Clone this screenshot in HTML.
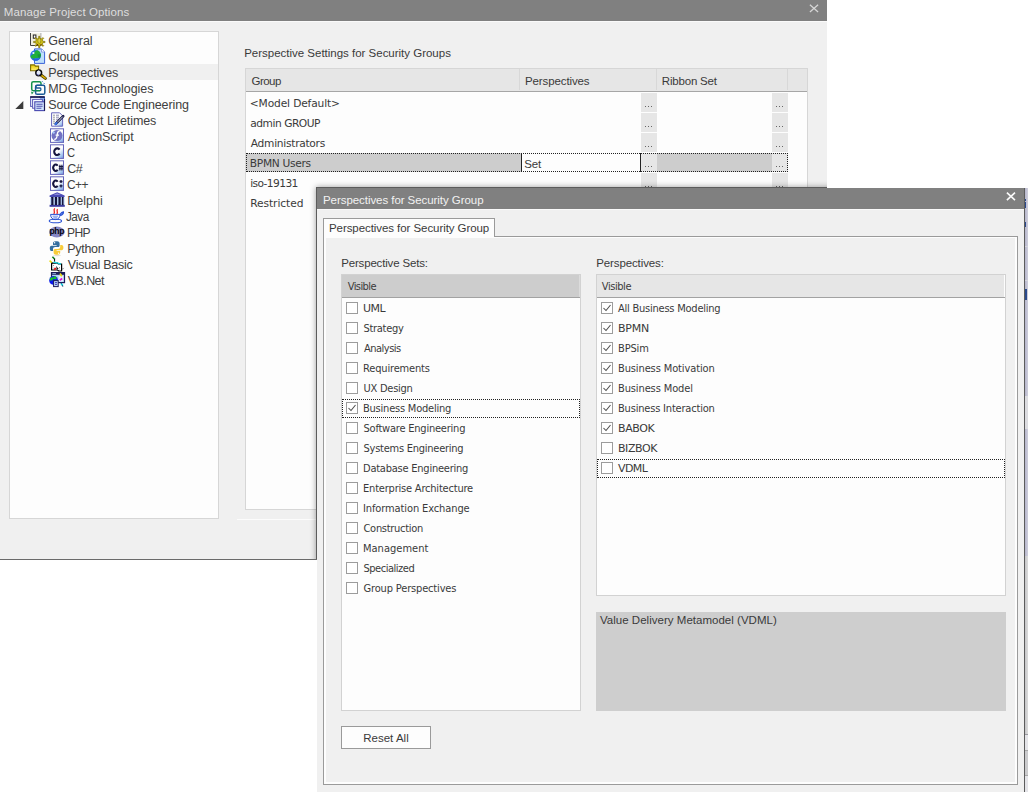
<!DOCTYPE html>
<html><head><meta charset="utf-8"><title>Manage Project Options</title>
<style>
*{box-sizing:border-box;margin:0;padding:0}
html,body{width:1028px;height:792px;overflow:hidden;background:#fff}
body{position:relative;font-family:"Liberation Sans",sans-serif;font-size:12px;color:#3a3a3a}
.a{position:absolute}
.t{position:absolute;white-space:nowrap;line-height:16px;height:16px}
.seg{font-family:"Liberation Sans",sans-serif;font-size:11.5px}
.tah{font-family:"DejaVu Sans Condensed","DejaVu Sans",sans-serif;font-stretch:condensed;font-size:11px}

.tahw{font-family:"DejaVu Sans",sans-serif;font-size:11px}
.dv{font-family:"DejaVu Sans",sans-serif;font-size:10.67px}
.lb{font-family:"Liberation Sans",sans-serif;font-size:12.5px;color:#404040}
#d1{position:absolute;left:0;top:0;width:827px;height:560px;background:#f0f0f0;border-bottom:1px solid #6a6a6a;overflow:hidden}
#cut{position:absolute;left:316px;top:187px;width:600px;height:500px;border-left:1px solid #5c5c5c;border-top:1px solid #5c5c5c;box-shadow:0 0 6px rgba(0,0,0,.38);background:#f0f0f0}
.tb{position:absolute;left:0;top:0;right:0;height:21px;background:#808080;color:#dedede}
#tree{position:absolute;left:9px;top:31px;width:210px;height:488px;background:#fdfdfd;border:1px solid #d6d6d6}
.tr{position:absolute;left:0;width:208px;height:16px}
.tr svg{position:absolute;top:0}
#tbl{position:absolute;left:245px;top:68px;width:563px;height:442px;background:#fdfdfd;border:1px solid #d6d6d6}
#d2{position:absolute;left:317px;top:188px;width:708px;height:620px;background:#f0f0f0;border-right:1px solid #5c5c5c}
.cb{position:absolute;width:12px;height:12px;border:1px solid #9c9c9c;background:#fff}
.cb svg{position:absolute;left:0;top:0}
.eb{position:absolute;width:16px;height:19px;background:#e6e6e6}
.eb i{position:absolute;top:13px;width:1px;height:1px;background:#666}
</style></head><body>

<div id="d1">
<div class="tb">
<span class="t seg" style="left:3.8px;top:4px;letter-spacing:0.10px;">Manage Project Options</span>
<svg class="a" style="left:809px;top:4px" width="10" height="10" viewBox="0 0 10 10"><path d="M.9 .7L9.1 8M9.1 .7L.9 8" stroke="#d6d6d6" stroke-width="1.25" fill="none"/></svg></div>
<div class="a" style="left:0;top:21px;width:827px;height:1px;background:#fafafa"></div>
<div id="tree">
<div class="tr" style="top:0px">
<svg style="left:20px;overflow:visible" width="17" height="16" viewBox="0 0 17 16"><path d="M0.5 1V13.5H11" fill="none" stroke="#444" stroke-width="1"/><path d="M1 1.2H10.8V13H1Z" fill="#f1efe0"/><path d="M10.9 1V8" stroke="#aaa" stroke-width="1"/><rect x="3.3" y="3" width="2.6" height="3.2" fill="#fff" stroke="#222" stroke-width="1"/><g transform="translate(9.3,10)"><path d="M-0.6 -3.7L-0.6 -5.7L0.6 -5.7L0.6 -3.7L2.2 -3.0L3.6 -4.4L4.4 -3.6L3.0 -2.2L3.7 -0.6L5.7 -0.6L5.7 0.6L3.7 0.6L3.0 2.2L4.4 3.6L3.6 4.4L2.2 3.0L0.6 3.7L0.6 5.7L-0.6 5.7L-0.6 3.7L-2.2 3.0L-3.6 4.4L-4.4 3.6L-3.0 2.2L-3.7 0.6L-5.7 0.6L-5.7 -0.6L-3.7 -0.6L-3.0 -2.2L-4.4 -3.6L-3.6 -4.4L-2.2 -3.0Z" fill="#cbbd16" stroke="#7a6c00" stroke-width=".7"/><ellipse cx="0" cy="-1.2" rx="1.5" ry="2.6" fill="#ddd24a" stroke="#8a7c00" stroke-width=".6"/><path d="M-2.6 3.4L-1.4 2.2M2.6 3.4L1.4 2.2" stroke="#501000" stroke-width="1"/></g></svg>
<span class="t lb" style="left:38.2px;top:1px;letter-spacing:-0.01px;">General</span>
</div>
<div class="tr" style="top:16px">
<svg style="left:20px;overflow:visible" width="17" height="16" viewBox="0 0 17 16"><path d="M4.5 0.9H11.5L14.6 4V15.4H4.5Z" fill="#bfe0fb" stroke="#3a62d8" stroke-width="1"/><path d="M11.5 0.9V4H14.6" fill="#fff" stroke="#7a8ee0" stroke-width=".8"/><circle cx="5.6" cy="7.4" r="5.4" fill="#2a74e6"/><path d="M0.4 8.5C1 6.5 3 6.8 4 5.2C4.5 3.5 5.5 2.4 7.5 2.3C9.6 3 10.8 5 10.9 7.5C10 9 9 9 8 10C6.5 10.6 5.5 9.6 4.5 10.5C3 11 1.2 10.4 0.4 8.5Z" fill="#1fb03a"/><path d="M7.5 6.5C8.5 6 9.5 6.5 10.8 6.2C11 8 10.5 9.5 9.6 10.8C8.5 10 7.5 8.5 7.5 6.5Z" fill="#14903a" opacity=".8"/><path d="M2 10.2C4 11.6 7 11.4 9.8 10.4C8.8 12 7.2 12.8 5.6 12.8C4.2 12.8 2.8 12 2 10.2Z" fill="#2a62dc"/><circle cx="3.4" cy="5" r="1.1" fill="#f0f8ff"/></svg>
<span class="t lb" style="left:38.2px;top:1px;letter-spacing:-0.23px;">Cloud</span>
</div>
<div class="tr" style="top:32px;background:#f0f0f0">
<svg style="left:20px;overflow:visible" width="17" height="16" viewBox="0 0 17 16"><defs><linearGradient id="gf" x1="0" y1="0" x2="0" y2="1"><stop offset="0" stop-color="#e6c800"/><stop offset="1" stop-color="#fff27a"/></linearGradient></defs><path d="M0.6 0.9H4.4L5.4 2.1H8.6V6.8H0.6Z" fill="url(#gf)" stroke="#7d6e00" stroke-width="1.1"/><path d="M11 11L15.4 14.4" stroke="#4a3c00" stroke-width="3" stroke-linecap="round"/><path d="M11.4 11.3L15.2 14.2" stroke="#d8ac00" stroke-width="1.5" stroke-linecap="round"/><circle cx="8.7" cy="8.8" r="2.9" fill="#dfe6fb" stroke="#0c0c0c" stroke-width="1.5"/><path d="M6.6 9.6A2.4 2.4 0 0 0 8.8 11.2" stroke="#7070d0" stroke-width="1" fill="none"/><path d="M7.6 7.4A1.8 1.8 0 0 1 9.4 7" stroke="#fff" stroke-width="1" fill="none"/></svg>
<span class="t lb" style="left:38.2px;top:1px;letter-spacing:-0.13px;">Perspectives</span>
</div>
<div class="tr" style="top:48px">
<svg style="left:20px;overflow:visible" width="17" height="16" viewBox="0 0 17 16"><rect x="1.7" y="1.7" width="9.3" height="9" rx="1.6" fill="none" stroke="#13924a" stroke-width="1.5"/><rect x="5.6" y="5.3" width="9.2" height="9" rx="1.6" fill="#fdfdfd" stroke="#1a5a96" stroke-width="1.5"/><path d="M10.2 5.4H6.8C5.6 5.4 5.6 8 6.8 8H10C11.2 8 11.2 10.7 10 10.7H5.4" fill="none" stroke="#1a5a96" stroke-width="1.3"/><path d="M5.6 10.7H10.2" stroke="#13924a" stroke-width="1.4"/><path d="M1 11.6L3.6 12.4L1.8 14.4Z" fill="#13924a"/><path d="M12 1.2L13 2.2M13.8 3L14.6 4" stroke="#3a7ac8" stroke-width="1"/></svg>
<span class="t lb" style="left:38.2px;top:1px;letter-spacing:-0.00px;">MDG Technologies</span>
</div>
<div class="tr" style="top:64px">
<svg style="left:5px;top:4px" width="10" height="10" viewBox="0 0 10 10"><path d="M8.3 1V9H0.3Z" fill="#3c3c3c"/></svg>
<svg style="left:20px;overflow:visible" width="17" height="16" viewBox="0 0 17 16"><rect x="0.6" y="1" width="10.4" height="9.4" fill="#eaf2fe" stroke="#5c5cb8" stroke-width="1"/><path d="M9 1H14.4V9.4" fill="#8fb4ee" stroke="#2a4ec0" stroke-width="1"/><rect x="0.2" y="0.2" width="14.6" height="1.6" fill="#16164a"/><rect x="2.6" y="3.4" width="9.8" height="8.8" fill="#f4f8ff" stroke="#5c5cb8" stroke-width="1"/><rect x="4.8" y="5.8" width="9.6" height="8.8" fill="#d2e4fb" stroke="#4848b0" stroke-width="1.1"/><path d="M6.4 8.2H12.6M6.4 10.2H12.6M6.4 12.2H11.4" stroke="#5050b4" stroke-width="1.1"/><path d="M14.6 3V14.8" stroke="#16164a" stroke-width="1"/></svg>
<span class="t lb" style="left:38.2px;top:1px;letter-spacing:-0.11px;">Source Code Engineering</span>
</div>
<div class="tr" style="top:80px">
<svg style="left:39px;overflow:visible" width="17" height="16" viewBox="0 0 17 16"><defs><linearGradient id="go" x1="0" y1="0" x2="1" y2="1"><stop offset=".6" stop-color="#fefefe"/><stop offset=".85" stop-color="#a8c8f0"/><stop offset="1" stop-color="#6f8fdc"/></linearGradient></defs><path d="M2.6 0.8H10.6L13.6 3.8V14.2H2.6Z" fill="url(#go)" stroke="#6666bb" stroke-width="1"/><path d="M4.5 3.2H5.5M4.5 5.2H5.5M4.5 7.2H5.5M4.5 9.2H5.5M4.5 11.2H5.5" stroke="#333" stroke-width="1"/><path d="M7 3.2H10M7 5.2H10M7 7.2H10.5M7 9.2H9" stroke="#8a8ab0" stroke-width="1"/><path d="M14.2 4.2L7 11.6" stroke="#141440" stroke-width="2.6" stroke-linecap="round"/><path d="M13.8 4.6L8.2 10.4" stroke="#e8eefc" stroke-width=".9"/><path d="M6.4 12.3L7.6 11" stroke="#3a70e0" stroke-width="2.2" stroke-linecap="round"/></svg>
<span class="t lb" style="left:57.8px;top:1px;letter-spacing:-0.07px;">Object Lifetimes</span>
</div>
<div class="tr" style="top:96px">
<svg style="left:39px;overflow:visible" width="17" height="16" viewBox="0 0 17 16"><defs><linearGradient id="gq" x1="0" y1="0" x2="1" y2="1"><stop offset=".55" stop-color="#fefefe"/><stop offset=".8" stop-color="#a8c8f0"/><stop offset="1" stop-color="#6f8fdc"/></linearGradient></defs><rect x="1.5" y="0.8" width="13" height="13.6" fill="url(#gq)" stroke="#6666bb" stroke-width="1"/><circle cx="8" cy="7.6" r="5.5" fill="#7272c2"/><circle cx="4.6" cy="4.6" r="1.2" fill="#a8c8f8"/><path d="M10.6 3.4C8.6 3.2 8.4 5 8.2 7C8 9.6 7.4 11.4 5.2 11.4M6.6 7.2H10" stroke="#fff" stroke-width="1.3" fill="none"/></svg>
<span class="t lb" style="left:57.8px;top:1px;letter-spacing:-0.08px;">ActionScript</span>
</div>
<div class="tr" style="top:112px">
<svg style="left:39px;overflow:visible" width="17" height="16" viewBox="0 0 17 16"><rect x="1.5" y="0.8" width="13" height="13.6" fill="url(#gq)" stroke="#6666bb" stroke-width="1"/><path d="M10.6 5.7A3 3.3 0 1 0 10.6 9.7" fill="none" stroke="#15153f" stroke-width="2.1"/></svg>
<span class="t lb" style="left:57.2px;top:1px;letter-spacing:-0.60px;transform:scaleX(0.894);transform-origin:0 0;">C</span>
</div>
<div class="tr" style="top:128px">
<svg style="left:39px;overflow:visible" width="17" height="16" viewBox="0 0 17 16"><rect x="1.5" y="0.8" width="13" height="13.6" fill="url(#gq)" stroke="#6666bb" stroke-width="1"/><path d="M8.6 5.7A2.4 3.3 0 1 0 8.6 9.7" fill="none" stroke="#15153f" stroke-width="2"/><path d="M10.9 4.8V10.6M12.9 4.8V10.6M9.8 6.6H14M9.8 8.8H14" stroke="#15153f" stroke-width="1.1"/></svg>
<span class="t lb" style="left:57.2px;top:1px;letter-spacing:-0.45px;">C#</span>
</div>
<div class="tr" style="top:144px">
<svg style="left:39px;overflow:visible" width="17" height="16" viewBox="0 0 17 16"><rect x="1.5" y="0.8" width="13" height="13.6" fill="url(#gq)" stroke="#6666bb" stroke-width="1"/><path d="M8.6 5.7A2.4 3.3 0 1 0 8.6 9.7" fill="none" stroke="#15153f" stroke-width="2"/><path d="M12 4V7M10.5 5.5H13.5M12 8.4V11.4M10.5 9.9H13.5" stroke="#15153f" stroke-width="1.3"/></svg>
<span class="t lb" style="left:57.2px;top:1px;letter-spacing:-0.60px;transform:scaleX(0.959);transform-origin:0 0;">C++</span>
</div>
<div class="tr" style="top:160px">
<svg style="left:39px;overflow:visible" width="17" height="16" viewBox="0 0 17 16"><path d="M8.2 0.2L15.6 3.6V5H0.6V3.6Z" fill="#4a4ab4"/><path d="M8.2 1.2L12 3H4.4Z" fill="#8a8ad8"/><rect x="0.6" y="12.8" width="15.2" height="2" fill="#3a3aa0"/><g fill="#15153f"><rect x="2" y="5" width="2.6" height="8"/><rect x="5.6" y="5" width="2.6" height="8"/><rect x="9.2" y="5" width="2.6" height="8"/><rect x="12.6" y="5" width="2.2" height="8"/></g><g fill="#9ec4f4"><rect x="1.4" y="5.4" width=".9" height="7.2"/><rect x="4.8" y="5.4" width=".9" height="7.2"/><rect x="8.4" y="5.4" width=".9" height="7.2"/><rect x="11.9" y="5.4" width=".8" height="7.2"/><rect x="14.6" y="5.4" width=".8" height="7.2"/></g></svg>
<span class="t lb" style="left:57.2px;top:1px;letter-spacing:0.03px;">Delphi</span>
</div>
<div class="tr" style="top:176px">
<svg style="left:39px;overflow:visible" width="17" height="16" viewBox="0 0 17 16"><path d="M5.8 0.4C3.6 2.2 6.8 3.6 4.8 6M8.6 1.2C6.8 2.8 9.6 3.8 7.8 6" stroke="#ee1111" stroke-width="1.2" fill="none"/><path d="M1.6 6.4H11C11 9.4 9.4 11.6 6.3 11.6C3.2 11.6 1.6 9.4 1.6 6.4Z" fill="#f4f6ff" stroke="#2a52d4" stroke-width="1"/><path d="M3.6 8.2H9M4.4 9.8H8.2" stroke="#6a8aec" stroke-width=".9"/><path d="M11 7.4C13 7.2 14.6 5.6 14.4 4C13.4 4 12 5 11.2 6.4" stroke="#2a52d4" stroke-width="1.3" fill="none"/><ellipse cx="6.4" cy="13" rx="6.2" ry="1.8" fill="none" stroke="#2a52d4" stroke-width="1.1"/></svg>
<span class="t lb" style="left:56.2px;top:1px;letter-spacing:-0.60px;transform:scaleX(0.942);transform-origin:0 0;">Java</span>
</div>
<div class="tr" style="top:192px">
<svg style="left:39px;overflow:visible" width="17" height="16" viewBox="0 0 17 16"><ellipse cx="7.8" cy="8" rx="7.8" ry="5.4" fill="#8686c4"/><ellipse cx="6" cy="6.5" rx="5" ry="3" fill="#a0a0d4" opacity=".6"/><text x="7.8" y="10.2" text-anchor="middle" font-family="'Liberation Sans',sans-serif" font-weight="700" font-size="8.6" letter-spacing="-.4" fill="#050510">php</text></svg>
<span class="t lb" style="left:57.2px;top:1px;letter-spacing:-0.60px;transform:scaleX(0.965);transform-origin:0 0;">PHP</span>
</div>
<div class="tr" style="top:208px">
<svg style="left:39px;overflow:visible" width="17" height="16" viewBox="0 0 17 16"><path d="M6.6 1.2C4.4 1.2 4 2.2 4 3.4V5H7.6V5.8H2.6C1.2 5.8 .8 7 .8 8.4C.8 9.8 1.4 11 2.6 11H4V9C4 7.8 5 7 6.2 7H9.2C10.2 7 10.6 6.2 10.6 5.4V3.2C10.6 2 9.4 1.2 8.4 1.2Z" fill="#356f9f"/><circle cx="5.6" cy="2.8" r=".7" fill="#fff"/><path d="M8.6 14.8C10.8 14.8 11.2 13.8 11.2 12.6V11H7.6V10.2H12.6C14 10.2 14.4 9 14.4 7.6C14.4 6.2 13.8 5 12.6 5H11.2V7C11.2 8.2 10.2 9 9 9H6C5 9 4.6 9.8 4.6 10.6V12.8C4.6 14 5.8 14.8 6.8 14.8Z" fill="#f8cc3a"/><circle cx="9.6" cy="13.2" r=".7" fill="#fff"/><ellipse cx="8" cy="15.6" rx="4" ry=".6" fill="#bbb" opacity=".5"/></svg>
<span class="t lb" style="left:57.2px;top:1px;letter-spacing:-0.27px;">Python</span>
</div>
<div class="tr" style="top:224px">
<svg style="left:39px;overflow:visible" width="17" height="16" viewBox="0 0 17 16"><path d="M2.6 7.2H8.4L9.4 8H12.6V15H9.6L8.6 14H2.6Z" fill="#fff" stroke="#000" stroke-width="1.2"/><path d="M4.4 6.4H6.4L7.2 7H9.2L10 7.8H12" stroke="#10e0e8" stroke-width="1.2" fill="none"/><path d="M4 9.5H5M7 10.5H8M10 11.5H11M4.5 12H5.5M10.5 13H11" stroke="#999" stroke-width="1"/><path d="M7.6 11.2L9 12.6L7.6 13" stroke="#000" stroke-width="1" fill="#000"/><path d="M3.4 0.8L5.8 3.2" stroke="#0a7a1a" stroke-width="1.6"/><path d="M5.6 3L5.6 5.6" stroke="#000" stroke-width="1"/><path d="M.6 4.6L2.8 6.6" stroke="#eadc10" stroke-width="1.6"/><path d="M2.8 6.6L3.6 7.2" stroke="#000" stroke-width="1"/><path d="M5.2 13.6L6.8 12" stroke="#e81010" stroke-width="1.7"/><path d="M13 12.6L15.4 11.8L13.4 14Z" fill="#888"/></svg>
<span class="t lb" style="left:57.8px;top:1px;letter-spacing:-0.27px;">Visual Basic</span>
</div>
<div class="tr" style="top:240px">
<svg style="left:39px;overflow:visible" width="17" height="16" viewBox="0 0 17 16"><rect x="2.5" y="0.6" width="13" height="10" fill="#b4d2f6" stroke="#1c1c58" stroke-width="1.2"/><rect x="2.5" y="0.6" width="13" height="2.2" fill="#1c1c58"/><path d="M3.4 1.6H7" stroke="#9ab4e8" stroke-width=".9"/><rect x="9.6" y="4" width="4.6" height="5.4" fill="#eaf2fe"/><circle cx="4.6" cy="8.4" r="4.4" fill="#0a18f0"/><path d="M.6 7L2.6 5.2L4.4 5.6L5 4.2L7 4.6L7.8 6.4L6 7.4L4.6 6.8L3 8.4L1 8.6Z" fill="#18c02a"/><rect x="4.6" y="8.6" width="4.6" height="6" fill="#bcd6f8" stroke="#1c1c58" stroke-width="1"/><path d="M6 10.6H8M6 12.4H8" stroke="#3a3ac0" stroke-width="1"/><path d="M11 1.6L12.8 4.2" stroke="#eadc10" stroke-width="1.7"/><path d="M10.8 8.2L13.2 6.6" stroke="#e414d8" stroke-width="1.8"/><path d="M12 11.2L13.8 13.8" stroke="#10d0e0" stroke-width="1.7"/><path d="M11.6 10.4L12.4 11.6M13.4 13.4L13.8 14.6" stroke="#1c1c58" stroke-width="1"/></svg>
<span class="t lb" style="left:57.8px;top:1px;letter-spacing:-0.59px;">VB.Net</span>
</div>
</div>
<span class="t seg" style="left:244.2px;top:45px;letter-spacing:-0.01px;">Perspective Settings for Security Groups</span>
<div id="tbl">
<div class="a" style="left:0;top:0;width:561px;height:22px;background:#e6e6e6"></div>
<div class="a" style="left:0;top:22px;width:561px;height:1px;background:#a6a6a6"></div>
<div class="a" style="left:273px;top:0;width:1px;height:21px;background:#d8d8d8"></div>
<div class="a" style="left:410px;top:0;width:1px;height:21px;background:#d8d8d8"></div>
<div class="a" style="left:541px;top:0;width:1px;height:21px;background:#d8d8d8"></div>
<span class="t seg" style="left:5.5px;top:4px;letter-spacing:-0.53px;">Group</span>
<span class="t seg" style="left:279.0px;top:4px;letter-spacing:-0.11px;">Perspectives</span>
<span class="t seg" style="left:415.8px;top:4px;letter-spacing:-0.19px;">Ribbon Set</span>
<span class="t dv" style="left:3.8px;top:27px;letter-spacing:-0.14px;">&lt;Model Default&gt;</span>
<div class="eb" style="left:395px;top:24px"><i style="left:4px"></i><i style="left:7px"></i><i style="left:10px"></i></div>
<div class="eb" style="left:526px;top:24px"><i style="left:4px"></i><i style="left:7px"></i><i style="left:10px"></i></div>
<span class="t dv" style="left:4.2px;top:47px;letter-spacing:-0.47px;">admin GROUP</span>
<div class="eb" style="left:395px;top:44px"><i style="left:4px"></i><i style="left:7px"></i><i style="left:10px"></i></div>
<div class="eb" style="left:526px;top:44px"><i style="left:4px"></i><i style="left:7px"></i><i style="left:10px"></i></div>
<span class="t dv" style="left:4.8px;top:67px;letter-spacing:-0.29px;">Administrators</span>
<div class="eb" style="left:395px;top:64px"><i style="left:4px"></i><i style="left:7px"></i><i style="left:10px"></i></div>
<div class="eb" style="left:526px;top:64px"><i style="left:4px"></i><i style="left:7px"></i><i style="left:10px"></i></div>
<div class="a" style="left:0;top:84px;width:542px;height:19px;background:#cdcdcd"></div>
<div class="a" style="left:275px;top:84px;width:120px;height:19px;background:#fdfdfd;border-left:1px solid #222;border-right:1px solid #222"></div>
<span class="t seg" style="left:278.2px;top:87px;letter-spacing:-0.17px;">Set</span>
<span class="t dv" style="left:3.8px;top:87px;letter-spacing:-0.32px;">BPMN Users</span>
<div class="eb" style="left:395px;top:84px"><i style="left:4px"></i><i style="left:7px"></i><i style="left:10px"></i></div>
<div class="eb" style="left:526px;top:84px"><i style="left:4px"></i><i style="left:7px"></i><i style="left:10px"></i></div>
<div class="a" style="left:0;top:84px;width:542px;height:19px;border:1px dotted #222"></div>
<span class="t dv" style="left:4.2px;top:107px;letter-spacing:-0.60px;">iso-19131</span>
<div class="eb" style="left:395px;top:104px"><i style="left:4px"></i><i style="left:7px"></i><i style="left:10px"></i></div>
<div class="eb" style="left:526px;top:104px"><i style="left:4px"></i><i style="left:7px"></i><i style="left:10px"></i></div>
<span class="t dv" style="left:4.2px;top:127px;letter-spacing:-0.07px;">Restricted</span>
<div class="eb" style="left:395px;top:124px"><i style="left:4px"></i><i style="left:7px"></i><i style="left:10px"></i></div>
<div class="eb" style="left:526px;top:124px"><i style="left:4px"></i><i style="left:7px"></i><i style="left:10px"></i></div>
</div>
<div class="a" style="left:237px;top:519px;width:590px;height:1px;background:#fcfcfc"></div>
<div id="cut"></div>
</div>
<div class="a" style="left:1025px;top:188px;width:3px;height:604px;background:linear-gradient(90deg,#b6b6cc,#cfcfdc)"></div>
<div class="a" style="left:1025px;top:396px;width:3px;height:33px;background:#dcdce0"></div>
<div class="a" style="left:1025px;top:246px;width:3px;height:1px;background:#d4d4dc"></div>
<div class="a" style="left:1025px;top:280px;width:3px;height:1px;background:#d4d4dc"></div>
<div class="a" style="left:1025px;top:556px;width:3px;height:236px;background:linear-gradient(90deg,#c6c6c8,#dcdcdc)"></div>
<div class="a" style="left:1025px;top:734px;width:3px;height:1px;background:#9a9aa0"></div>
<div class="a" style="left:1025px;top:735px;width:3px;height:15px;background:#e4e4e8"></div>
<div class="a" style="left:1025px;top:750px;width:3px;height:26px;background:#cbcbcd;border-top:1px solid #a8a8a8;border-bottom:1px solid #a8a8a8"></div>
<div class="a" style="left:1025px;top:776px;width:3px;height:16px;background:#e4e4e8"></div>
<div class="a" style="left:1025px;top:199px;width:1px;height:2px;background:#2a4a8c"></div>
<div class="a" style="left:1025px;top:202px;width:1px;height:6px;background:#2a4a8c"></div>
<div class="a" style="left:1025px;top:222px;width:1px;height:5px;background:#2a4a8c"></div>
<div class="a" style="left:1025px;top:289px;width:2px;height:11px;background:#2a4a8c"></div>
<div id="d2">
<div class="tb" style="color:#f2f2f2">
<span class="t seg" style="left:6.0px;top:4px;letter-spacing:-0.06px;">Perspectives for Security Group</span>
<svg class="a" style="left:689px;top:4px" width="10" height="10" viewBox="0 0 10 10"><path d="M.9 .7L9 8.1M9 .7L.9 8.1" stroke="#fbfbfb" stroke-width="1.6" fill="none"/></svg></div>
<div class="a" style="left:0;top:21px;width:707px;height:1px;background:#fafafa"></div>
<div class="a" style="left:6px;top:48px;width:695px;height:549px;border:1px solid #9a9a9a;background:#f0f0f0;box-shadow:inset 1px 1px 0 #fdfdfd,inset -2px -2px 0 #fdfdfd,inset 2px 0 0 #fdfdfd"></div>
<div class="a" style="left:6px;top:30px;width:172px;height:19px;border:1px solid #9a9a9a;border-bottom:none;background:#fdfdfd"></div>
<div class="a" style="left:7px;top:48px;width:170px;height:2px;background:#fdfdfd"></div>
<span class="t seg" style="left:12.0px;top:32px;letter-spacing:-0.07px;">Perspectives for Security Group</span>
<span class="t seg" style="left:24.2px;top:67px;letter-spacing:-0.17px;">Perspective Sets:</span>
<span class="t seg" style="left:279.2px;top:67px;letter-spacing:-0.11px;">Perspectives:</span>
<div class="a" style="left:24px;top:86px;width:240px;height:437px;border:1px solid #d2d2d2;background:#fdfdfd"></div>
<div class="a" style="left:25px;top:87px;width:238px;height:22px;background:#cdcdcd;border-right:1px solid #dcdcdc"></div>
<div class="a" style="left:25px;top:109px;width:238px;height:1px;background:#a2a2a2"></div>
<span class="t tah" style="left:30.8px;top:91px;letter-spacing:-0.60px;">Visible</span>
<div class="cb" style="left:29px;top:114px"></div>
<span class="t tahw" style="left:46.0px;top:113px;letter-spacing:-0.53px;">UML</span>
<div class="cb" style="left:29px;top:134px"></div>
<span class="t tah" style="left:46.5px;top:133px;letter-spacing:-0.30px;">Strategy</span>
<div class="cb" style="left:29px;top:154px"></div>
<span class="t tah" style="left:47.0px;top:153px;letter-spacing:-0.51px;">Analysis</span>
<div class="cb" style="left:29px;top:174px"></div>
<span class="t tah" style="left:46.0px;top:173px;letter-spacing:-0.16px;">Requirements</span>
<div class="cb" style="left:29px;top:194px"></div>
<span class="t tah" style="left:46.5px;top:193px;letter-spacing:-0.25px;">UX Design</span>
<div class="a" style="left:25px;top:211px;width:238px;height:19px;border:1px dotted #222"></div>
<div class="cb" style="left:29px;top:214px"><svg width="10" height="10" viewBox="0 0 10 10"><path d="M1.5 5L4 7.5L8.5 2" stroke="#4c4c4c" stroke-width="1.05" fill="none"/></svg></div>
<span class="t tah" style="left:46.0px;top:213px;letter-spacing:-0.22px;">Business Modeling</span>
<div class="cb" style="left:29px;top:234px"></div>
<span class="t tah" style="left:46.5px;top:233px;letter-spacing:-0.22px;">Software Engineering</span>
<div class="cb" style="left:29px;top:254px"></div>
<span class="t tah" style="left:46.5px;top:253px;letter-spacing:-0.25px;">Systems Engineering</span>
<div class="cb" style="left:29px;top:274px"></div>
<span class="t tah" style="left:46.0px;top:273px;letter-spacing:-0.23px;">Database Engineering</span>
<div class="cb" style="left:29px;top:294px"></div>
<span class="t tah" style="left:46.0px;top:293px;letter-spacing:-0.20px;">Enterprise Architecture</span>
<div class="cb" style="left:29px;top:314px"></div>
<span class="t tah" style="left:46.0px;top:313px;letter-spacing:-0.11px;">Information Exchange</span>
<div class="cb" style="left:29px;top:334px"></div>
<span class="t tah" style="left:46.5px;top:333px;letter-spacing:-0.29px;">Construction</span>
<div class="cb" style="left:29px;top:354px"></div>
<span class="t tah" style="left:46.0px;top:353px;letter-spacing:0.01px;">Management</span>
<div class="cb" style="left:29px;top:374px"></div>
<span class="t tah" style="left:46.5px;top:373px;letter-spacing:-0.48px;">Specialized</span>
<div class="cb" style="left:29px;top:394px"></div>
<span class="t tah" style="left:46.5px;top:393px;letter-spacing:-0.16px;">Group Perspectives</span>
<div class="a" style="left:279px;top:86px;width:410px;height:322px;border:1px solid #d2d2d2;background:#fdfdfd"></div>
<div class="a" style="left:280px;top:87px;width:407px;height:22px;background:#e6e6e6"></div>
<div class="a" style="left:280px;top:109px;width:408px;height:1px;background:#a2a2a2"></div>
<span class="t tah" style="left:284.8px;top:91px;letter-spacing:-0.43px;">Visible</span>
<div class="cb" style="left:284px;top:114px"><svg width="10" height="10" viewBox="0 0 10 10"><path d="M1.5 5L4 7.5L8.5 2" stroke="#4c4c4c" stroke-width="1.05" fill="none"/></svg></div>
<span class="t tah" style="left:301.0px;top:113px;letter-spacing:-0.23px;">All Business Modeling</span>
<div class="cb" style="left:284px;top:134px"><svg width="10" height="10" viewBox="0 0 10 10"><path d="M1.5 5L4 7.5L8.5 2" stroke="#4c4c4c" stroke-width="1.05" fill="none"/></svg></div>
<span class="t tahw" style="left:301.0px;top:133px;letter-spacing:-0.26px;">BPMN</span>
<div class="cb" style="left:284px;top:154px"><svg width="10" height="10" viewBox="0 0 10 10"><path d="M1.5 5L4 7.5L8.5 2" stroke="#4c4c4c" stroke-width="1.05" fill="none"/></svg></div>
<span class="t tah" style="left:301.0px;top:153px;letter-spacing:-0.14px;">BPSim</span>
<div class="cb" style="left:284px;top:174px"><svg width="10" height="10" viewBox="0 0 10 10"><path d="M1.5 5L4 7.5L8.5 2" stroke="#4c4c4c" stroke-width="1.05" fill="none"/></svg></div>
<span class="t tah" style="left:301.0px;top:173px;letter-spacing:-0.12px;">Business Motivation</span>
<div class="cb" style="left:284px;top:194px"><svg width="10" height="10" viewBox="0 0 10 10"><path d="M1.5 5L4 7.5L8.5 2" stroke="#4c4c4c" stroke-width="1.05" fill="none"/></svg></div>
<span class="t tah" style="left:301.0px;top:193px;letter-spacing:-0.12px;">Business Model</span>
<div class="cb" style="left:284px;top:214px"><svg width="10" height="10" viewBox="0 0 10 10"><path d="M1.5 5L4 7.5L8.5 2" stroke="#4c4c4c" stroke-width="1.05" fill="none"/></svg></div>
<span class="t tah" style="left:301.0px;top:213px;letter-spacing:-0.19px;">Business Interaction</span>
<div class="cb" style="left:284px;top:234px"><svg width="10" height="10" viewBox="0 0 10 10"><path d="M1.5 5L4 7.5L8.5 2" stroke="#4c4c4c" stroke-width="1.05" fill="none"/></svg></div>
<span class="t tahw" style="left:301.0px;top:233px;letter-spacing:-0.39px;">BABOK</span>
<div class="cb" style="left:284px;top:254px"></div>
<span class="t tahw" style="left:301.0px;top:253px;letter-spacing:-0.43px;">BIZBOK</span>
<div class="a" style="left:280px;top:271px;width:408px;height:19px;border:1px dotted #222"></div>
<div class="cb" style="left:284px;top:274px"></div>
<span class="t tahw" style="left:301.0px;top:273px;letter-spacing:-0.58px;">VDML</span>
<div class="a" style="left:279px;top:424px;width:410px;height:99px;background:#cecece"></div>
<span class="t seg" style="left:283.0px;top:424px;letter-spacing:0.02px;">Value Delivery Metamodel (VDML)</span>
<div class="a" style="left:24px;top:538px;width:90px;height:23px;border:1px solid #9a9a9a;background:#fdfdfd"></div>
<span class="t seg" style="left:46.2px;top:542px;letter-spacing:0.02px;">Reset All</span>
</div>
</body></html>
